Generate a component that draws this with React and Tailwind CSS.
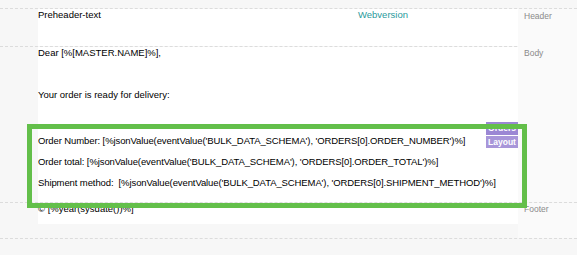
import React from "react";

export default function App() {
  const font = { fontFamily: '"Liberation Sans", Arial, sans-serif' };
  return (
    <div
      className="relative w-[577px] h-[255px] overflow-hidden bg-[#f7f7f7] pt-[8px] text-[9.5px] leading-[14px] text-black"
      style={font}
    >
      {/* Header */}
      <div className="flex h-[38px] border-t border-dashed border-[#dcdcdc]">
        <div className="ml-[38px] w-[480px] bg-white relative">
          <div className="-mt-[1px]">Preheader-text</div>
          <span className="absolute left-[320px] -top-[1px] text-[#2a9a9c]">Webversion</span>
        </div>
        <div className="flex-1 bg-[#fafafa] pl-[6px] text-[8.5px] text-[#8a8a8a]">Header</div>
      </div>

      {/* Body */}
      <div className="flex h-[156px] border-t border-dashed border-[#dcdcdc]">
        <div className="ml-[38px] w-[480px] bg-white relative">
          <div className="-mt-[1px]">Dear [%[MASTER.NAME]%],</div>
          <div className="mt-[28px]">Your order is ready for delivery:</div>
          <div className="mt-[32px] flex flex-col gap-[7px] tracking-[-0.1px]">
            <div>Order Number: [%jsonValue(eventValue('BULK_DATA_SCHEMA'), 'ORDERS[0].ORDER_NUMBER')%]</div>
            <div>Order total: [%jsonValue(eventValue('BULK_DATA_SCHEMA'), 'ORDERS[0].ORDER_TOTAL')%]</div>
            <div>Shipment method:&nbsp; [%jsonValue(eventValue('BULK_DATA_SCHEMA'), 'ORDERS[0].SHIPMENT_METHOD')%]</div>
          </div>
        </div>
        <div className="flex-1 bg-[#fafafa] pl-[6px] text-[8.5px] text-[#8a8a8a] -mt-[1px]">Body</div>
      </div>

      {/* Footer */}
      <div className="flex h-[37px] border-t border-b border-dashed border-[#dcdcdc]">
        <div className="ml-[38px] w-[480px] h-[21px] bg-white">
          <div className="-mt-[1px]">© [%year(sysdate())%]</div>
        </div>
        <div className="flex-1 bg-[#fafafa] pl-[6px] text-[8.5px] text-[#8a8a8a]">
          <div className="-mt-[1px]">Footer</div>
        </div>
      </div>

      {/* Selected block tags */}
      <div className="absolute left-[486px] top-[122px] w-[32px] h-[13px] bg-[#9b87d4] text-white text-[8.5px] leading-[13px] text-center font-bold">Orders</div>
      <div className="absolute left-[486px] top-[136px] w-[32px] h-[12px] bg-[#a896d9] text-white text-[8.5px] leading-[12px] text-center font-bold">Layout</div>

      {/* Selection outline */}
      <div className="absolute left-[27px] top-[124px] w-[500px] h-[84px] border-[5px] border-[#63bf4a]"></div>
    </div>
  );
}
